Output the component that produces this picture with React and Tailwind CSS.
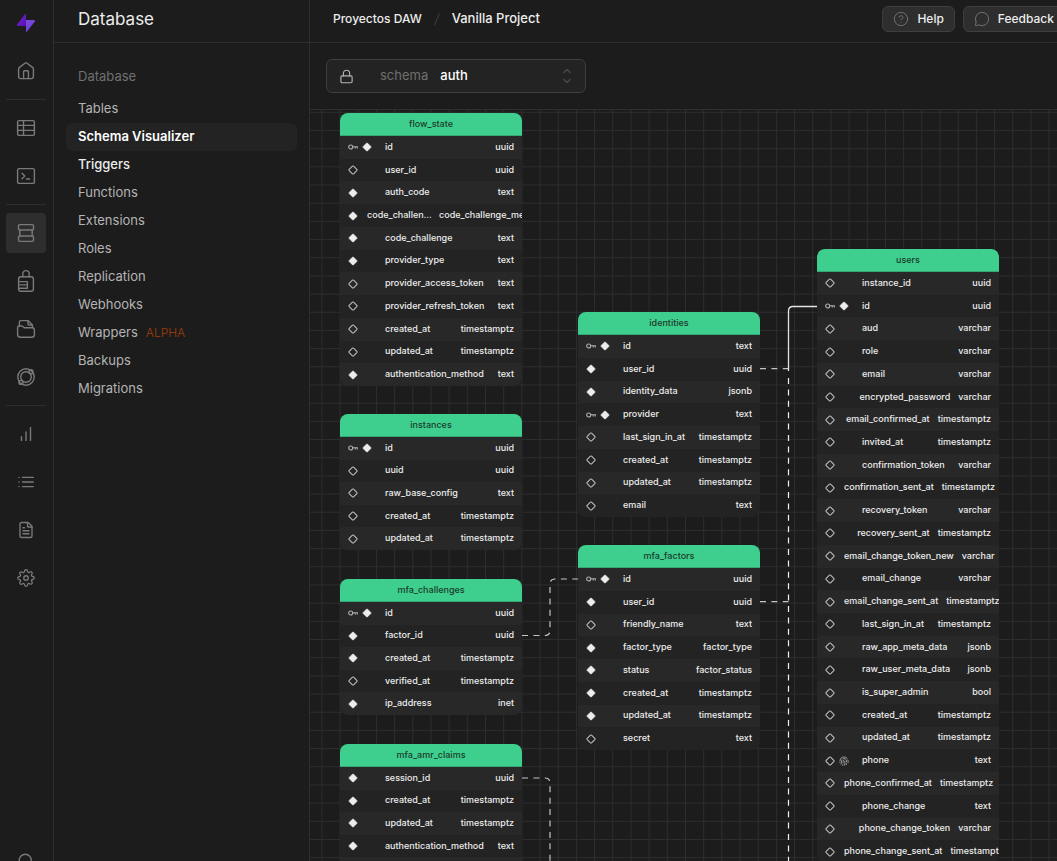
import React from "react";
import {
  ChevronDown,
  ChevronUp,
  CircleHelp,
  FileText,
  Fingerprint,
  Lock,
  MessageCircle,
  Search,
} from "lucide-react";
import { FiSettings } from "react-icons/fi";

const ROW = 250 / 11;
const NODE_WIDTH = 182;

const nodes = [
  {
    name: "flow_state",
    x: 30,
    y: 3,
    columns: [
      ["id", "uuid", "key"],
      ["user_id", "uuid", "null"],
      ["auth_code", "text", "req"],
      ["code_challenge_method", "code_challenge_method", "req"],
      ["code_challenge", "text", "req"],
      ["provider_type", "text", "req"],
      ["provider_access_token", "text", "null"],
      ["provider_refresh_token", "text", "null"],
      ["created_at", "timestamptz", "null"],
      ["updated_at", "timestamptz", "null"],
      ["authentication_method", "text", "req"],
    ],
  },
  {
    name: "instances",
    x: 30,
    y: 304,
    columns: [
      ["id", "uuid", "key"],
      ["uuid", "uuid", "null"],
      ["raw_base_config", "text", "null"],
      ["created_at", "timestamptz", "null"],
      ["updated_at", "timestamptz", "null"],
    ],
  },
  {
    name: "mfa_challenges",
    x: 30,
    y: 469,
    columns: [
      ["id", "uuid", "key"],
      ["factor_id", "uuid", "req"],
      ["created_at", "timestamptz", "req"],
      ["verified_at", "timestamptz", "null"],
      ["ip_address", "inet", "req"],
    ],
  },
  {
    name: "mfa_amr_claims",
    x: 30,
    y: 634,
    columns: [
      ["session_id", "uuid", "req"],
      ["created_at", "timestamptz", "req"],
      ["updated_at", "timestamptz", "req"],
      ["authentication_method", "text", "req"],
      ["id", "uuid", "key"],
    ],
  },
  {
    name: "identities",
    x: 268,
    y: 202,
    columns: [
      ["id", "text", "key"],
      ["user_id", "uuid", "req"],
      ["identity_data", "jsonb", "req"],
      ["provider", "text", "key"],
      ["last_sign_in_at", "timestamptz", "null"],
      ["created_at", "timestamptz", "null"],
      ["updated_at", "timestamptz", "null"],
      ["email", "text", "null"],
    ],
  },
  {
    name: "mfa_factors",
    x: 268,
    y: 435,
    columns: [
      ["id", "uuid", "key"],
      ["user_id", "uuid", "req"],
      ["friendly_name", "text", "null"],
      ["factor_type", "factor_type", "req"],
      ["status", "factor_status", "req"],
      ["created_at", "timestamptz", "req"],
      ["updated_at", "timestamptz", "req"],
      ["secret", "text", "null"],
    ],
  },
  {
    name: "users",
    x: 507,
    y: 139,
    columns: [
      ["instance_id", "uuid", "null"],
      ["id", "uuid", "key"],
      ["aud", "varchar", "null"],
      ["role", "varchar", "null"],
      ["email", "varchar", "null"],
      ["encrypted_password", "varchar", "null"],
      ["email_confirmed_at", "timestamptz", "null"],
      ["invited_at", "timestamptz", "null"],
      ["confirmation_token", "varchar", "null"],
      ["confirmation_sent_at", "timestamptz", "null"],
      ["recovery_token", "varchar", "null"],
      ["recovery_sent_at", "timestamptz", "null"],
      ["email_change_token_new", "varchar", "null"],
      ["email_change", "varchar", "null"],
      ["email_change_sent_at", "timestamptz", "null"],
      ["last_sign_in_at", "timestamptz", "null"],
      ["raw_app_meta_data", "jsonb", "null"],
      ["raw_user_meta_data", "jsonb", "null"],
      ["is_super_admin", "bool", "null"],
      ["created_at", "timestamptz", "null"],
      ["updated_at", "timestamptz", "null"],
      ["phone", "text", "unique"],
      ["phone_confirmed_at", "timestamptz", "null"],
      ["phone_change", "text", "null"],
      ["phone_change_token", "varchar", "null"],
      ["phone_change_sent_at", "timestamptz", "null"],
    ],
  },
];

const menu = [
  "Tables",
  "Schema Visualizer",
  "Triggers",
  "Functions",
  "Extensions",
  "Roles",
  "Replication",
  "Webhooks",
  "Wrappers",
  "Backups",
  "Migrations",
];

function Glyph({ children }) {
  return (
    <svg
      width="20"
      height="20"
      viewBox="0 0 20 20"
      fill="none"
      stroke="currentColor"
      strokeWidth="1.4"
      strokeLinecap="round"
      strokeLinejoin="round"
      aria-hidden="true"
    >
      {children}
    </svg>
  );
}

const HomeGlyph = () => (
  <Glyph>
    <path d="M2.6 8 Q2.6 7.2 3.2 6.6 L9.2 2 Q10 1.4 10.8 2 L16.8 6.6 Q17.4 7.2 17.4 8 V15.6 Q17.4 17.6 15.4 17.6 H4.6 Q2.6 17.6 2.6 15.6 Z" />
    <path d="M7.6 17.5 V10.6 Q7.6 9.7 8.5 9.7 H11.5 Q12.4 9.7 12.4 10.6 V17.5" />
  </Glyph>
);
const TableGlyph = () => (
  <Glyph>
    <rect x="1.6" y="2.6" width="16.8" height="14.8" rx="1.5" />
    <path d="M1.6 7.4 H18.4 M1.6 12.4 H18.4 M7.5 2.6 V17.4" />
  </Glyph>
);
const TerminalGlyph = () => (
  <Glyph>
    <rect x="1.6" y="2.6" width="16.8" height="14.8" rx="1.5" />
    <path d="M6 7.3 L8.8 10 L6 12.7 M10.4 13 H13.6" />
  </Glyph>
);
const DatabaseGlyph = () => (
  <Glyph>
    <rect x="2.5" y="1.6" width="15" height="5.4" rx="1.3" />
    <path d="M3.8 7 V13 M16.2 7 V13" />
    <rect x="2.5" y="13" width="15" height="5.4" rx="1.3" />
  </Glyph>
);
const AuthGlyph = () => (
  <svg width="20" height="24" viewBox="0 0 20 24" fill="none" stroke="currentColor" strokeWidth="1.4" strokeLinecap="round" strokeLinejoin="round" aria-hidden="true">
    <path d="M6.8 7.8 V4.8 a3.2 3.2 0 0 1 6.4 0 V7.8" />
    <rect x="2.6" y="7.8" width="14.8" height="14.4" rx="2.2" />
    <path d="M2.6 12.6 H11.4 V19.2 H2.6 M4 15.9 H11.4" />
  </svg>
);
const StorageGlyph = () => (
  <Glyph>
    <path d="M3.4 7.2 V2.8 Q3.4 1.6 4.6 1.6 H12 L16.4 6 V8.6" />
    <path d="M12 1.8 V5 Q12 6 13 6 H16.2" />
    <path d="M1.6 8.4 Q1.6 7 3 7 H5.6 Q6.4 7 6.9 7.5 L7.9 8.4 Q8.4 8.8 9.1 8.8 H16.2 Q18.4 8.8 18.4 11 V15.4 Q18.4 18.2 15.6 18.2 H4.4 Q1.6 18.2 1.6 15.4 Z" />
  </Glyph>
);
const EdgeGlyph = () => (
  <Glyph>
    <circle cx="10" cy="10" r="8.2" />
    <circle cx="10" cy="10" r="5.3" />
    <circle cx="15" cy="4.8" r="2" />
    <circle cx="5" cy="15.4" r="2" />
  </Glyph>
);
const ReportsGlyph = () => (
  <Glyph>
    <path d="M5.5 16.4 V12.8 M10 16.4 V8 M14.5 16.4 V3.4" />
  </Glyph>
);
const ListGlyph = () => (
  <Glyph>
    <path d="M6.5 5.4 H17.3 M6.5 10 H17.3 M6.5 14.6 H17.3 M2.9 5.4 H3 M2.9 10 H3 M2.9 14.6 H3" />
  </Glyph>
);

const navGroups = [
  [["Home", <HomeGlyph />]],
  [
    ["Table editor", <TableGlyph />],
    ["SQL editor", <TerminalGlyph />],
  ],
  [
    ["Database", <DatabaseGlyph />],
    ["Authentication", <AuthGlyph />],
    ["Storage", <StorageGlyph />],
    ["Edge functions", <EdgeGlyph />],
  ],
  [
    ["Reports", <ReportsGlyph />],
    ["Logs", <ListGlyph />],
    ["API docs", <FileText size={18} strokeWidth={1.8} />],
    ["Project settings", <FiSettings size={18} strokeWidth={1.7} />],
  ],
];

function Logo() {
  return (
    <svg width="20" height="20" viewBox="0 0 20 20" aria-hidden="true">
      <defs>
        <linearGradient id="boltUpper" x1="0" y1="0" x2="1" y2="1">
          <stop offset="0" stopColor="#6d28d9" />
          <stop offset="1" stopColor="#5b0fae" />
        </linearGradient>
        <linearGradient id="boltLower" x1="0" y1="0" x2="0.6" y2="1">
          <stop offset="0" stopColor="#7c4be0" />
          <stop offset="1" stopColor="#6d3fd0" />
        </linearGradient>
      </defs>
      <path d="M10 7 H18 Q19.6 7.2 18.7 8.7 L11 18.6 Q10 19.4 10 18 Z" fill="url(#boltLower)" />
      <path d="M10 13 H2 Q0.4 12.8 1.3 11.3 L9 1.3 Q10 0.5 10 2 Z" fill="url(#boltUpper)" />
    </svg>
  );
}

function Diamond({ filled }) {
  return (
    <svg className="size-2.5 shrink-0" viewBox="0 0 10 10" aria-hidden="true">
      <path
        d="M4.4 1.2 Q5 0.7 5.6 1.2 L8.8 4.4 Q9.3 5 8.8 5.6 L5.6 8.8 Q5 9.3 4.4 8.8 L1.2 5.6 Q0.7 5 1.2 4.4 Z"
        fill={filled ? "#ededed" : "none"}
        stroke={filled ? "#ededed" : "#bdbdbd"}
        strokeWidth={filled ? "0.6" : "1.1"}
      />
    </svg>
  );
}

function Key() {
  return (
    <svg className="size-2.5 shrink-0" viewBox="0 0 10 10" fill="none" stroke="#b0b0b0" strokeWidth="1.1" aria-hidden="true">
      <circle cx="2.7" cy="5" r="2" />
      <path d="M4.7 4.8 H9.9 M7.2 4.8 V6.6 M9.3 4.8 V6.6" />
    </svg>
  );
}

function TableNode({ name, x, y, columns }) {
  const height = Math.round((columns.length + 1) * ROW);
  return (
    <table
      className="absolute flex flex-col overflow-hidden rounded-lg text-[9px] leading-3 font-medium text-[#ededed]"
      style={{ left: x, top: y, width: NODE_WIDTH, height }}
    >
      <thead className="block">
        <tr className="block">
          <th colSpan={3} className="flex h-[23px] items-center justify-center border-b border-[#34a877] bg-[#3ecf8e] font-medium text-[#1c3a2c]">
            {name}
          </th>
        </tr>
      </thead>
      <tbody className="grid min-h-0 flex-1 auto-rows-fr">
        {columns.map(([column, type, kind]) => {
          const wide = type === "code_challenge_method";
          return (
            <tr key={column} className="flex min-h-0 items-center overflow-hidden bg-[#232323] odd:bg-[#282828]">
              <td className="flex min-w-[27px] basis-[45px] gap-1 pl-2">
                {kind === "key" && <Key />}
                <Diamond filled={kind === "key" || kind === "req"} />
                {kind === "unique" && <Fingerprint size={10} color="#b0b0b0" className="shrink-0" />}
              </td>
              <td className={wide ? "w-[68px] shrink-0 truncate pb-px" : "flex-1 shrink-0 pb-px whitespace-nowrap"}>
                {column}
              </td>
              <td className={wide ? "shrink-0 pb-px pl-1 whitespace-nowrap" : "shrink-0 px-2 pb-px text-right whitespace-nowrap"}>
                {type}
              </td>
            </tr>
          );
        })}
      </tbody>
    </table>
  );
}

function Canvas() {
  return (
    <section aria-label="Schema diagram" className="relative min-h-0 flex-1 overflow-hidden border-t border-[#2e2e2e]">
      <svg className="absolute inset-0 size-full" aria-hidden="true">
        <defs>
          <pattern id="grid" x="11.4" y="1.8" width="18.18" height="18.18" patternUnits="userSpaceOnUse">
            <path d="M0.5 0 V18.18 M0 0.5 H18.18" stroke="#2d2d2d" strokeWidth="1" />
          </pattern>
        </defs>
        <rect width="100%" height="100%" fill="url(#grid)" />
        <g fill="none" stroke="#c4c4c4" strokeWidth="1.2" strokeDasharray="6 5.4">
          <path d="M212 525.5 H235 Q240 525.5 240 520.5 V474 Q240 469 245 469 H268" />
          <path d="M212 668 H235 Q240 668 240 673 V760" />
          <path d="M450 258.7 H478.5" />
          <path d="M450 491.7 H478.5" />
          <path d="M478.5 268 V760" stroke="#f0f0f0" />
        </g>
        <path d="M478.5 261 V201 Q478.5 196.5 483 196.5 H507" fill="none" stroke="#e4e4e4" strokeWidth="1.3" />
      </svg>
      {nodes.map((node) => (
        <TableNode key={node.name} {...node} />
      ))}
    </section>
  );
}

export default function App() {
  return (
    <div className="flex h-screen overflow-hidden bg-[#1c1c1c] font-['Inter',sans-serif] text-[#ededed]">
      <nav aria-label="Project" className="flex w-[54px] shrink-0 flex-col gap-2 border-r border-[#2e2e2e] px-1.5 pt-[3px] text-[#7a7a7a]">
        <a href="#" aria-label="Dashboard" className="flex size-10 shrink-0 items-center justify-center">
          <Logo />
        </a>
        {navGroups.map((group, index) => (
          <React.Fragment key={index}>
            {index > 0 && <hr className="w-10 shrink-0 border-[#2e2e2e]" />}
            {group.map(([label, icon]) => (
              <a
                key={label}
                href="#"
                aria-label={label}
                className={
                  label === "Database"
                    ? "flex size-10 shrink-0 items-center justify-center rounded bg-[#2e2e2e]"
                    : "flex size-10 shrink-0 items-center justify-center"
                }
              >
                {icon}
              </a>
            ))}
          </React.Fragment>
        ))}
        <button type="button" aria-label="Search" className="mt-auto -mb-5 flex size-10 shrink-0 items-center justify-center">
          <Search size={18} strokeWidth={1.8} />
        </button>
      </nav>

      <aside className="flex w-64 shrink-0 flex-col border-r border-[#2e2e2e]">
        <div className="flex h-[43px] items-center border-b border-[#2e2e2e] px-6 pb-1">
          <h1 className="text-[17px] leading-6">Database</h1>
        </div>
        <div className="px-3 pt-5">
          <h2 className="flex h-7 items-center px-3 text-[13px] text-[#707070]">Database</h2>
          <ul className="mt-1">
            {menu.map((item) => (
              <li key={item}>
                <a
                  href="#"
                  className={
                    item === "Schema Visualizer"
                      ? "flex h-7 items-center gap-2 rounded-md bg-[#232323] px-3 text-[13px] font-semibold text-white"
                      : item === "Triggers"
                        ? "flex h-7 items-center gap-2 px-3 text-[13px] font-medium text-[#ededed]"
                        : "flex h-7 items-center gap-2 px-3 text-[13px] text-[#b4b4b4]"
                  }
                >
                  {item}
                  {item === "Wrappers" && <span className="text-xs font-light text-[#a03c0c]">ALPHA</span>}
                </a>
              </li>
            ))}
          </ul>
        </div>
      </aside>

      <main className="flex min-w-0 flex-1 flex-col">
        <header className="flex h-[43px] shrink-0 items-center border-b border-[#2e2e2e] pb-1 pl-[23px] font-medium">
          <a href="#" className="text-xs">Proyectos DAW</a>
          <svg className="mx-2 size-3.5 shrink-0 text-[#3e3e3e]" viewBox="0 0 14 14" stroke="currentColor" aria-hidden="true">
            <path d="M9.5 1 L4.5 13" />
          </svg>
          <a href="#" className="text-[13px]">Vanilla Project</a>
          <div className="-mr-2 ml-auto flex shrink-0 gap-2 text-xs">
            <button type="button" className="flex h-[26px] items-center gap-2 rounded-md border border-[#3e3e3e] bg-[#2e2e2e] px-2.5">
              <CircleHelp size={16} strokeWidth={1.3} className="text-[#7a7a7a]" />
              Help
            </button>
            <button type="button" className="flex h-[26px] items-center gap-2 rounded-md border border-[#3e3e3e] bg-[#2e2e2e] px-2.5">
              <MessageCircle size={16} strokeWidth={1.3} className="text-[#7a7a7a]" />
              Feedback
            </button>
          </div>
        </header>

        <div className="flex h-[66px] shrink-0 items-center px-4">
          <div className="flex h-[34px] w-[260px] items-center rounded-md border border-[#3e3e3e] bg-[#232323] px-3">
            <Lock size={15} strokeWidth={1.8} className="text-[#b4b4b4]" />
            <label htmlFor="schema" className="ml-[26px] text-[13px] text-[#707070]">schema</label>
            <select id="schema" defaultValue="auth" className="ml-3 min-w-0 flex-1 appearance-none bg-transparent text-[13px] font-medium text-white outline-none">
              <option>auth</option>
              <option>public</option>
            </select>
            <span className="flex flex-col text-[#484848]">
              <ChevronUp size={12} strokeWidth={3} className="-mb-0.5" />
              <ChevronDown size={12} strokeWidth={3} />
            </span>
          </div>
        </div>

        <Canvas />
      </main>
    </div>
  );
}
